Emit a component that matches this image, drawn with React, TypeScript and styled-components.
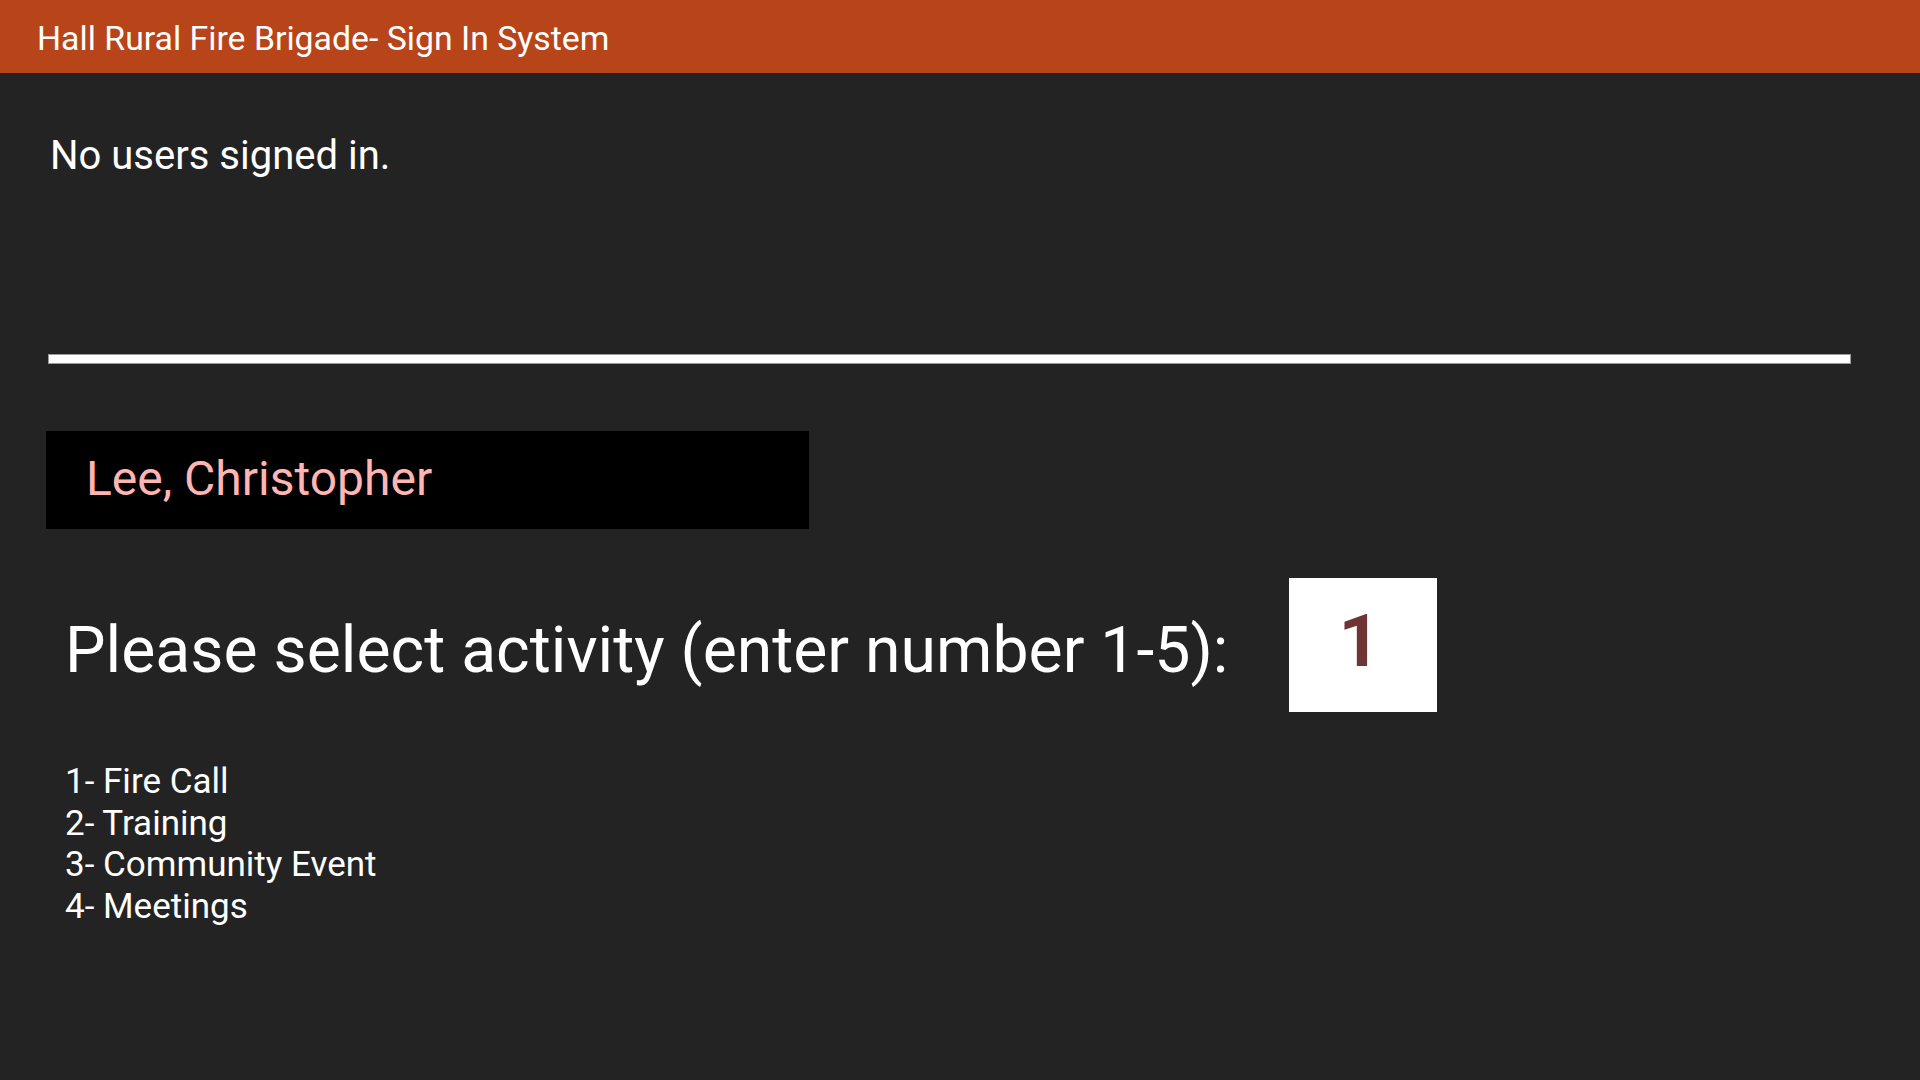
import React from "react";
import styled, { createGlobalStyle } from "styled-components";

const GlobalStyle = createGlobalStyle`
  html, body {
    margin: 0;
    padding: 0;
    background: #232323;
    font-family: Roboto, "Noto Sans", Arial, sans-serif;
    color: #ffffff;
  }
  #root {
    min-height: 1080px;
    background: #232323;
  }
`;

const Header = styled.header`
  height: 73px;
  background: #b8441a;
  display: flex;
  align-items: center;
  padding-left: 37px;
  padding-top: 3px;
  box-sizing: border-box;
`;

const Title = styled.h1`
  margin: 0;
  font-size: 33.8px;
  font-weight: 400;
  color: #ffffff;
`;

const Main = styled.main`
  padding-left: 46px;
`;

const SignedInPanel = styled.section`
  height: 281px;
  box-sizing: border-box;
  padding-top: 59px;
  padding-left: 4px;
`;

const StatusText = styled.p`
  margin: 0;
  font-size: 40px;
  line-height: normal;
`;

const Divider = styled.div`
  margin-left: 2px;
  width: 1803px;
  height: 10px;
  box-sizing: border-box;
  background: #ffffff;
  border: 1px solid #9a9a9a;
`;

const NameBox = styled.div`
  margin-top: 67px;
  width: 763px;
  height: 98px;
  background: #000000;
  display: flex;
  align-items: center;
  padding-left: 40px;
  box-sizing: border-box;
  font-size: 48px;
  color: #ffb5b2;
  padding-bottom: 3px;
`;

const PromptRow = styled.div`
  margin-top: 49px;
  display: flex;
  align-items: center;
  padding-left: 19px;
`;

const Prompt = styled.span`
  font-size: 64.3px;
  line-height: normal;
  padding-top: 9px;
`;

const NumberBox = styled.div`
  margin-left: 61px;
  width: 148px;
  height: 134px;
  background: #ffffff;
  display: flex;
  align-items: center;
  justify-content: center;
  font-size: 73px;
  font-weight: 700;
  color: #6f3434;
  padding-right: 8px;
  padding-bottom: 8px;
  box-sizing: border-box;
`;

const ActivityList = styled.ul`
  list-style: none;
  margin: 49px 0 0 0;
  padding-left: 19px;
`;

const ActivityItem = styled.li`
  font-size: 35px;
  line-height: 41.7px;
`;

const activities = ["1- Fire Call", "2- Training", "3- Community Event", "4- Meetings"];

export default function App() {
  return (
    <>
      <GlobalStyle />
      <Header>
        <Title>Hall Rural Fire Brigade- Sign In System</Title>
      </Header>
      <Main>
        <SignedInPanel>
          <StatusText>No users signed in.</StatusText>
        </SignedInPanel>
        <Divider />
        <NameBox>Lee, Christopher</NameBox>
        <PromptRow>
          <Prompt>Please select activity (enter number 1-5):</Prompt>
          <NumberBox>1</NumberBox>
        </PromptRow>
        <ActivityList>
          {activities.map((a) => (
            <ActivityItem key={a}>{a}</ActivityItem>
          ))}
        </ActivityList>
      </Main>
    </>
  );
}
